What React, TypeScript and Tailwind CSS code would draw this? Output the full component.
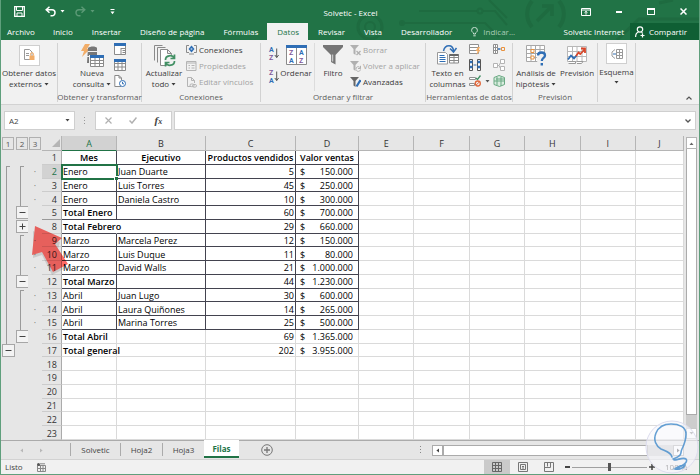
import clsx from "clsx";
import type { ReactNode } from "react";

type Row = {
  n: number;
  a?: string;
  b?: string;
  c?: string;
  d?: string;
  total?: boolean;
  l1?: "start" | "line" | "minus";
  l2?: "start" | "line" | "minus" | "plus";
};

const rows: Row[] = [
  { n: 1, a: "Mes", b: "Ejecutivo", c: "Productos vendidos", d: "Valor ventas" },
  { n: 2, a: "Enero", b: "Juan Duarte", c: "5", d: "150.000", l1: "start", l2: "start" },
  { n: 3, a: "Enero", b: "Luis Torres", c: "45", d: "250.000", l1: "line", l2: "line" },
  { n: 4, a: "Enero", b: "Daniela Castro", c: "10", d: "300.000", l1: "line", l2: "line" },
  { n: 5, a: "Total Enero", c: "60", d: "700.000", total: true, l1: "line", l2: "minus" },
  { n: 8, a: "Total Febrero", c: "29", d: "660.000", total: true, l1: "line", l2: "plus" },
  { n: 9, a: "Marzo", b: "Marcela Perez", c: "12", d: "150.000", l1: "line", l2: "start" },
  { n: 10, a: "Marzo", b: "Luis Duque", c: "11", d: "80.000", l1: "line", l2: "line" },
  { n: 11, a: "Marzo", b: "David Walls", c: "21", d: "1.000.000", l1: "line", l2: "line" },
  { n: 12, a: "Total Marzo", c: "44", d: "1.230.000", total: true, l1: "line", l2: "minus" },
  { n: 13, a: "Abril", b: "Juan Lugo", c: "30", d: "600.000", l1: "line", l2: "start" },
  { n: 14, a: "Abril", b: "Laura Quiñones", c: "14", d: "265.000", l1: "line", l2: "line" },
  { n: 15, a: "Abril", b: "Marina Torres", c: "25", d: "500.000", l1: "line", l2: "line" },
  { n: 16, a: "Total Abril", c: "69", d: "1.365.000", total: true, l1: "line", l2: "minus" },
  { n: 17, a: "Total general", c: "202", d: "3.955.000", total: true, l1: "minus" },
  { n: 18 },
  { n: 19 },
  { n: 20 },
  { n: 21 },
  { n: 22 },
  { n: 23 },
];

const emptyColumns = ["E", "F", "G", "H", "I", "J"];

function Caret({ className = "" }) {
  return (
    <svg viewBox="0 0 5 3" className={clsx("inline-block h-[3px] w-[5px]", className)}>
      <path d="M0.5 0h4L2.5 2.6z" fill="currentColor" />
    </svg>
  );
}

function TitleDecoration() {
  return (
    <svg
      className="pointer-events-none absolute right-0 top-0 h-10 w-[360px]"
      viewBox="340 0 360 40"
      fill="none"
      stroke="#1e6b40"
      strokeWidth="2"
    >
      <circle cx="371" cy="27" r="12" strokeWidth="3" />
      <circle cx="371" cy="27" r="5" />
      <path d="M406 23h80l14 14" />
      <circle cx="403" cy="23" r="2" fill="#1e6b40" />
      <path d="M420 11h58m6 0h12l12 14M490 0l18 18" />
      <circle cx="481" cy="11" r="2.5" />
      <path d="M533 1a20 20 0 0 0 0 26M560 1a20 20 0 0 1 0 26" strokeWidth="4" />
      <path d="M538 21l14-14M543 6h10v10" strokeWidth="3.5" />
      <path d="M618 40l22-21h60M660 3l14-3" strokeWidth="3" />
    </svg>
  );
}

function TitleBar() {
  return (
    <div className="relative flex h-[23px] items-center text-white">
      <div className="flex flex-1 items-center pl-[13px]">
        <button aria-label="Guardar">
          <svg className="h-[11px] w-[11px]" viewBox="0 0 11 11" fill="none" stroke="#fff">
            <path d="M.7.7h9.6v9.6H.7z" strokeWidth="1.3" />
            <path d="M2.5 1v3.5h6V1M3 10V7h5v3" />
          </svg>
        </button>
        <button aria-label="Deshacer" className="ml-5">
          <svg className="h-[11px] w-[11px]" viewBox="0 0 11 11" fill="none" stroke="#fff" strokeWidth="1.5">
            <path d="M4.5.8L1.2 3.8l3.3 3M1.5 3.8H7a3 3 0 0 1 0 6H5.5" />
          </svg>
        </button>
        <Caret className="ml-1" />
        <button aria-label="Rehacer" className="ml-[10px]">
          <svg className="h-[11px] w-[11px]" viewBox="0 0 11 11" fill="none" stroke="#5b9a76" strokeWidth="1.4">
            <path d="M6.5.8l3.3 3-3.3 3M9.5 3.8H4a3 3 0 0 0 0 6h1.5" />
          </svg>
        </button>
        <Caret className="ml-1 text-[#5b9a76]" />
        <button aria-label="Personalizar" className="ml-[15px]">
          <svg className="h-[6px] w-[5px]" viewBox="0 0 5 6" fill="#fff">
            <path d="M.5 0h4v1h-4zM.5 2.5h4l-2 2.7z" />
          </svg>
        </button>
      </div>
      <h1 className="pt-[2px] text-[8px]">Solvetic - Excel</h1>
      <div className="flex flex-1 items-center justify-end gap-[25px] pr-3">
        <button aria-label="Opciones de cinta">
          <svg className="h-[8px] w-[10px]" viewBox="0 0 10 8" fill="none" stroke="#fff">
            <path d="M.5.5h9v7h-9zM1 2h8M5 6.7V3.5M3.5 4.7L5 3.3l1.5 1.4" />
          </svg>
        </button>
        <button aria-label="Minimizar" className="h-[2px] w-[6px] bg-white" />
        <button aria-label="Maximizar" className="h-[7px] w-[8px] border border-t-2 border-white" />
        <button aria-label="Cerrar">
          <svg className="h-[7px] w-[7px]" viewBox="0 0 7 7" stroke="#fff" strokeWidth="1.5">
            <path d="M.5.5l6 6M6.5.5l-6 6" />
          </svg>
        </button>
      </div>
    </div>
  );
}

function MenuTabs() {
  const tab = "h-[17px] pl-[10px] pr-[9px] leading-[17px]";
  return (
    <nav className="relative flex h-[17px] items-center whitespace-nowrap text-[8px] text-white">
      <button className="h-[17px] pl-[6px] pr-2 leading-[17px]">Archivo</button>
      <button className={tab}>Inicio</button>
      <button className={tab}>Insertar</button>
      <button className={tab}>Diseño de página</button>
      <button className={tab}>Fórmulas</button>
      <button className={clsx(tab, "bg-[#f1f1f1] text-[#217346]")}>Datos</button>
      <button className={tab}>Revisar</button>
      <button className={tab}>Vista</button>
      <button className={tab}>Desarrollador</button>
      <button className="ml-[10px] flex items-center gap-[5px] text-[#a9cdb8]">
        <svg className="h-[10px] w-[7px]" viewBox="0 0 7 10" fill="none" stroke="#c9e0d2">
          <path d="M2.5 7V6C1.5 5.3.6 4.5.6 3.3a2.9 2.9 0 0 1 5.8 0C6.4 4.5 5.5 5.3 4.5 6v1zM2.3 8.8h2.4" />
        </svg>
        Indicar...
      </button>
      <span className="ml-auto pr-[6px]">Solvetic Internet</span>
      <button className="flex h-[17px] w-[69px] items-center gap-1 bg-[#0f5f34] pl-[5px]">
        <svg className="h-[12px] w-[10px]" viewBox="0 0 10 12" fill="none" stroke="#fff" strokeWidth="1.2">
          <circle cx="5" cy="3.5" r="2.7" />
          <path d="M.6 11c0-2.5 1.2-4.5 3-5M6.5 6.2l1 1M7.5 7.5v4M5.5 9.5h4" />
        </svg>
        Compartir
      </button>
    </nav>
  );
}

function Group({ label, className, children }: { label?: string; className: string; children: ReactNode }) {
  return (
    <section className={clsx("mb-[2px] mt-[3px] flex flex-col border-r border-[#d2d2d2]", className)}>
      <div className="flex flex-1">{children}</div>
      <div className="flex h-[11px] justify-center leading-[11px] text-[#5c5c5c]">{label}</div>
    </section>
  );
}

function BigButton({ icon, lines, caret, className }: { icon: ReactNode; lines: string[]; caret?: boolean; className?: string }) {
  return (
    <button className={clsx("flex flex-col items-center leading-[11px] text-[#3b3b3b]", className)}>
      <span className="flex h-[24px] items-center">{icon}</span>
      {lines.map((line, i) => (
        <span key={line}>
          {line}
          {caret && i === lines.length - 1 && <Caret className="mb-px ml-[2px]" />}
        </span>
      ))}
    </button>
  );
}

function SmallButton({ icon, label, off }: { icon: ReactNode; label: string; off?: boolean }) {
  return (
    <button className={clsx("flex h-[16px] items-center gap-[2px]", off ? "text-[#a3a3a3]" : "text-[#3b3b3b]")}>
      {icon}
      {label}
    </button>
  );
}

function TableIcon({ mode }: { mode: "panel" | "grid" | "recent" }) {
  return (
    <svg className="h-[12px] w-[12px]" viewBox="0 0 12 12" fill="none" stroke="#8a8a8a">
      {mode === "recent" ? (
        <>
          <path d="M7 11.5H.8V.5H5l2.5 2.5v2M5 .5V3h2.5" fill="#fff" />
          <circle cx="8.5" cy="8.5" r="3" fill="#fff" stroke="#2f6eb5" />
          <path d="M8.5 6.8v2H10" stroke="#2f6eb5" />
        </>
      ) : (
        <>
          <path d="M.5.5h11v11H.5z" fill="#fff" />
          {mode === "grid" && <path d="M0 4.5h12M0 8h12M4 1v11M8 1v11" />}
          {mode === "panel" && <path d="M7 5.5h5M7 5v6M8.5 7.5h3M8.5 9.5h3" />}
          <path d="M0 1.5h12" stroke="#2f6eb5" strokeWidth="3" />
        </>
      )}
    </svg>
  );
}

function NewQueryIcon() {
  return (
    <svg className="h-[23px] w-[24px]" viewBox="0 0 24 23">
      <path d="M5 0h5L7 5h3L2 13l2-6H1z" fill="#f2ad68" />
      <path d="M8 4c2-2 8-2 9 0v7H9v8H7z" fill="#777" />
      <path d="M8 7.5h9M7 12.5h4" stroke="#f1f1f1" />
      <path d="M10.5 11.5h13v11h-13z" fill="#fff" stroke="#8a8a8a" />
      <path d="M10.5 16.5h13M10.5 19.5h13M15 13v9M19.5 13v9" stroke="#8a8a8a" />
      <path d="M10 12.5h14" stroke="#2f6eb5" strokeWidth="3" />
    </svg>
  );
}

function RefreshIcon() {
  return (
    <svg className="h-[23px] w-[23px]" viewBox="0 0 23 23" fill="none" stroke="#8a8a8a">
      <path d="M1.5 16.5V1.5h8M4.5 18.5V3.5h8" />
      <path d="M7.5 5.5h7l4 4v12h-11zM14.5 5.5v4h4" fill="#fff" />
      <circle cx="17" cy="16.5" r="6" fill="#f1f1f1" stroke="none" />
      <path
        d="M12.5 16c0-5 7-5.5 8.5-2M21.5 10.5V14.5H17.5M21.5 17c0 5-7 5.5-8.500 2M12.5 22.500V18.500h4"
        stroke="#429064"
        strokeWidth="1.7"
      />
    </svg>
  );
}

function ConnectionIcon() {
  return (
    <svg className="h-[10px] w-[11px]" viewBox="0 0 11 10" fill="none" stroke="#8a8a8a">
      <path d="M3 .5H.5v7H3M8 .5h2.5v7H8M3 9h5" />
      <path d="M5.5.5l3 3.5-3 3.5-3-3.5z" fill="#2f6eb5" stroke="none" />
      <path d="M4.7 4h1.6" stroke="#fff" />
    </svg>
  );
}

function PropertiesIcon() {
  return (
    <svg className="h-[10px] w-[11px]" viewBox="0 0 11 10" fill="none" stroke="#b4b4b4">
      <path d="M.5.5h9.5v9H.5zM1 2h9M2.5 4.5h1.5M2.5 7h1.5M5.5 4.5h3M5.5 7h3" />
    </svg>
  );
}

function LinksIcon() {
  return (
    <svg className="h-[11px] w-[11px]" viewBox="0 0 11 11" fill="none" stroke="#b4b4b4">
      <path d="M5 9.5H1.5V.5h4l3 3V6M5.5.5v3h3" />
      <rect x="4" y="7" width="4" height="2.6" rx="1.3" />
      <rect x="6.5" y="7.5" width="4" height="2.6" rx="1.3" />
    </svg>
  );
}

function SortSmallIcon({ top, bottom }: { top: string; bottom: string }) {
  const color = (c: string) => (c === "A" ? "#2f6eb5" : "#80589b");
  return (
    <svg className="h-[15px] w-[10px] overflow-visible font-['Roboto',sans-serif] font-bold" viewBox="0 0 10 15">
      <text x="0" y="6" fontSize="7" fill={color(top)}>{top}</text>
      <text x="0" y="14" fontSize="7" fill={color(bottom)}>{bottom}</text>
      <path d="M7.7 2.5v9M5.8 9l1.9 2.5L9.600 9" fill="none" stroke="#555" />
    </svg>
  );
}

function SortIcon() {
  return (
    <svg className="h-[20px] w-[21px] font-['Roboto',sans-serif] font-bold" viewBox="0 0 21 20">
      <path d="M.5.5h20v19H.5zM10.5 1v18" fill="#fff" stroke="#8a8a8a" />
      <path d="M0 1.5h21" stroke="#2f6eb5" strokeWidth="3" />
      <g fontSize="7">
        <text x="3" y="10" fill="#80589b">Z</text>
        <text x="3" y="18" fill="#2f6eb5">A</text>
        <text x="13" y="10" fill="#2f6eb5">A</text>
        <text x="13" y="18" fill="#80589b">Z</text>
      </g>
    </svg>
  );
}

function FunnelIcon() {
  return (
    <svg className="h-[20px] w-[20px]" viewBox="0 0 20 20">
      <path d="M0 0h20v2l-7.500 8v9.500L8 17v-7L0 2z" fill="#757575" />
      <path d="M9.5 9.5v7" stroke="#c6c6c6" strokeWidth="1.5" />
    </svg>
  );
}

function SmallFunnel({ mode }: { mode: "clear" | "again" | "edit" }) {
  return (
    <svg className="h-[11px] w-[11px]" viewBox="0 0 11 11" fill="none">
      <path d="M0 0h9L5.5 4v6L3.5 8.5V4z" fill={mode === "edit" ? "#666" : "#b0b0b0"} />
      {mode === "clear" && <path d="M6.5 6l4 4M10.5 6l-4 4" stroke="#b0b0b0" strokeWidth="1.3" />}
      {mode === "again" && <path d="M6 8c0-3 4-3 4.5-.5M10.5 8.5c-.5 2.5-4 2.5-4.3 0M10.5 4.8v2.7H8" stroke="#b0b0b0" />}
      {mode === "edit" && <path d="M10.5 3L6.5 9.5" stroke="#2f6eb5" strokeWidth="2.2" />}
    </svg>
  );
}

function TextColumnsIcon() {
  return (
    <svg className="h-[20px] w-[22px]" viewBox="0 0 22 20" fill="none">
      <path d="M.5 7.5h8l2 2v9.5H.5z" fill="#fff" stroke="#999" />
      <path d="M2.5 10.5h5M2.5 12.5h6M2.5 14.5h6M2.5 16.5h6" stroke="#2f6eb5" />
      <path d="M6.5 6C8-1 16-1 16.5 6M13 3.5l3.5 3.5 3-4" stroke="#2f6eb5" strokeWidth="1.5" />
      <path d="M12.5 9.5h9v8.5h-9zM17 9v9M13 12.5h8M13 15.5h8" fill="#fff" stroke="#888" />
      <path d="M12.5 10h9" stroke="#666" strokeWidth="2" />
    </svg>
  );
}

function DataToolIcon({ kind }: { kind: "fill" | "dup" | "check" | "merge" | "rel" | "model" }) {
  return (
    <svg className="h-[12px] w-[12px]" viewBox="0 0 12 12" fill="none" stroke="#909090">
      {kind === "fill" && (
        <>
          <path d="M.5 1.5h9v9H.5zM.5 4.5h9M.5 7.5h9" fill="#fff" />
          <path d="M9 4L6.5 8h2L7.500 12l4-5H9.500l1.500-3z" fill="#f2ad68" stroke="none" />
        </>
      )}
      {kind === "dup" && (
        <>
          <path d="M.5.5h3v11h-3zM8.5.5h3v11h-3z" fill="#fff" stroke="#555" />
          <path d="M1 3h2.5M1 8h2.5M8.5 3H11M8.5 8H11" stroke="#2f6eb5" strokeWidth="2.5" />
          <path d="M4.5 6h3" stroke="#2f6eb5" />
        </>
      )}
      {kind === "check" && (
        <>
          <path d="M.5 2.5h6v2h-6zM.5 8.5h5v2h-5z" fill="#fff" />
          <path d="M7 3l1.5 1.5L11.5.5" stroke="#429064" strokeWidth="1.3" />
          <circle cx="8.8" cy="8.5" r="2.5" stroke="#e0673b" strokeWidth="1.3" />
          <path d="M7 10.2l3.5-3.4" stroke="#e0673b" />
        </>
      )}
      {kind === "merge" && (
        <>
          <path d="M.5 1.5h4v9h-4zM.5 4.5h4M.5 7.5h4M2.5 2v8" fill="#fff" />
          <path d="M5 6h2.5" stroke="#2f6eb5" strokeWidth="1.5" />
          <path d="M8.5 4.5h3v3h-3z" stroke="#e8923f" />
        </>
      )}
      {kind === "rel" && (
        <path d="M.5 4.5h4v4h-4zM7.5.5h4v4h-4zM7.5 7.5h4v4h-4zM4.5 6.5h1.5l1.5-3M6 6.5l1.5 3" fill="#fff" stroke="#b4b4b4" />
      )}
      {kind === "model" && (
        <path d="M1 2.5l5-2 5.500 2v7l-5 2L1 9.500zM1 6h10M4 2v8M8 2v9M3 4h8" fill="#d9ecdf" stroke="#6aa983" />
      )}
    </svg>
  );
}

function WhatIfIcon() {
  return (
    <svg className="h-[21px] w-[21px]" viewBox="0 0 21 21" fill="none">
      <path d="M.5.5h18v16H.5zM.5 4.5h18M.5 8.5h18M.5 12.5h18M5 .5v16M9.5.5v16M14 .5v16" fill="#fff" stroke="#a8a8a8" />
      <path d="M5 4.5h3v3H5zM5 11h3v3H5z" fill="#fff" stroke="#e8923f" />
      <circle cx="15.5" cy="14" r="5" fill="#f1f1f1" />
      <path d="M12 10.500c0-4 7-4 7 0 0 2.500-3.200 2.500-3.200 5.500" stroke="#2f6eb5" strokeWidth="2.3" />
      <path d="M14.6 18h2.4v2.5h-2.400z" fill="#2f6eb5" />
    </svg>
  );
}

function ForecastIcon() {
  return (
    <svg className="h-[19px] w-[20px]" viewBox="0 0 20 19" fill="none">
      <path d="M.5.5h19v15H.5zM.5 5.5h19M.5 10.5h19M5.5.5v15M10 .5v15M15 .5v15" fill="#fff" stroke="#b8b8b8" />
      <path d="M1.5 15.5h7v2h-7M10 15.5h6l-1.5 2H10" stroke="#999" fill="#fff" />
      <path d="M1 13.5l3-4 3 3 2.5-3" stroke="#2f6eb5" strokeWidth="1.8" />
      <path d="M9 10l2.5-3.5 1.8 1.5L18 3M14 2.5h4V7" stroke="#d8472b" strokeWidth="1.8" />
    </svg>
  );
}

function BoxedIcon({ children }: { children: ReactNode }) {
  return <span className="flex h-[21px] w-[21px] items-center justify-center border border-[#cfcfcf] bg-white">{children}</span>;
}

function Ribbon() {
  return (
    <div className="flex h-[65px] overflow-hidden whitespace-nowrap border-b border-[#d2d2d2] bg-[#f1f1f1] text-[8px]">
      <Group className="w-[57px]">
        <BigButton
          className="w-full"
          caret
          lines={["Obtener datos", "externos"]}
          icon={
            <BoxedIcon>
              <svg className="h-[12px] w-[11px]" viewBox="0 0 11 12" fill="none">
                <path d="M.5.5h5l2.5 2.5v7.5H.5zM2 4.5h3M2 6.5h3" stroke="#999" />
                <path d="M5.5 6.5h5v4.5h-5z" fill="#f2ad68" />
                <path d="M6.5 6.5V5.2a1.5 1.5 0 0 1 3 0v1.3" stroke="#f2ad68" />
              </svg>
            </BoxedIcon>
          }
        />
      </Group>
      <Group className="w-[84px]" label="Obtener y transformar">
        <BigButton className="ml-3 w-[44px]" caret lines={["Nueva", "consulta"]} icon={<NewQueryIcon />} />
        <div className="flex flex-col gap-1">
          <button aria-label="Mostrar consultas"><TableIcon mode="panel" /></button>
          <button aria-label="Desde una tabla"><TableIcon mode="grid" /></button>
          <button aria-label="Fuentes recientes"><TableIcon mode="recent" /></button>
        </div>
      </Group>
      <Group className="w-[119px]" label="Conexiones">
        <BigButton className="w-[44px]" caret lines={["Actualizar", "todo"]} icon={<RefreshIcon />} />
        <div className="-mt-px">
          <SmallButton icon={<ConnectionIcon />} label="Conexiones" />
          <SmallButton off icon={<PropertiesIcon />} label="Propiedades" />
          <SmallButton off icon={<LinksIcon />} label="Editar vínculos" />
        </div>
      </Group>
      <Group className="w-[165px]" label="Ordenar y filtrar">
        <div className="flex w-[18px] flex-col items-end gap-2 pt-[3px]">
          <button aria-label="Ordenar de A a Z"><SortSmallIcon top="A" bottom="Z" /></button>
          <button aria-label="Ordenar de Z a A"><SortSmallIcon top="Z" bottom="A" /></button>
        </div>
        <BigButton className="w-[34px]" lines={["Ordenar"]} icon={<SortIcon />} />
        <div className="mx-px w-px bg-[#dcdcdc]" />
        <BigButton className="w-[34px]" lines={["Filtro"]} icon={<FunnelIcon />} />
        <div className="-mt-px">
          <SmallButton off icon={<SmallFunnel mode="clear" />} label="Borrar" />
          <SmallButton off icon={<SmallFunnel mode="again" />} label="Volver a aplicar" />
          <SmallButton icon={<SmallFunnel mode="edit" />} label="Avanzadas" />
        </div>
      </Group>
      <Group className="w-[87px]" label="Herramientas de datos">
        <BigButton className="w-[43px]" lines={["Texto en", "columnas"]} icon={<TextColumnsIcon />} />
        <div className="flex flex-col gap-1">
          <button aria-label="Relleno rápido"><DataToolIcon kind="fill" /></button>
          <button aria-label="Quitar duplicados"><DataToolIcon kind="dup" /></button>
          <button aria-label="Validación de datos"><DataToolIcon kind="check" /></button>
        </div>
        <div className="flex w-[12px] items-end justify-center pb-2 text-[#555]"><Caret /></div>
        <div className="flex flex-col gap-1">
          <button aria-label="Consolidar"><DataToolIcon kind="merge" /></button>
          <button aria-label="Relaciones"><DataToolIcon kind="rel" /></button>
          <button aria-label="Modelo de datos"><DataToolIcon kind="model" /></button>
        </div>
      </Group>
      <Group className="w-[85px]" label="Previsión">
        <BigButton className="w-[46px]" caret lines={["Análisis de", "hipótesis"]} icon={<WhatIfIcon />} />
        <BigButton className="w-[36px]" lines={["Previsión"]} icon={<ForecastIcon />} />
      </Group>
      <Group className="w-[38px]">
        <button className="flex w-full flex-col items-center leading-[11px] text-[#3b3b3b]">
          <BoxedIcon>
            <svg className="h-[10px] w-[12px]" viewBox="0 0 12 10" fill="none" stroke="#999">
              <path d="M5.5.5h6v9h-6zM5.5 3.5h6M5.5 6.5h6M8.5.5v9M4 .5L1 3v4l3 2.5" />
              <path d="M2 5h3" stroke="#2f6eb5" />
            </svg>
          </BoxedIcon>
          <span className="mt-[2px]">Esquema</span>
          <Caret className="mt-1" />
        </button>
      </Group>
      <button aria-label="Contraer la cinta" className="ml-auto self-end pb-1 pr-[7px]">
        <svg className="h-[4px] w-[6px]" viewBox="0 0 6 4" fill="none" stroke="#555" strokeWidth="1.2">
          <path d="M.5 3.5L3 1l2.5 2.5" />
        </svg>
      </button>
    </div>
  );
}

function FormulaBar() {
  return (
    <div className="flex items-center bg-[#e6e6e6] px-[3px] py-[6px] text-[8px] text-[#444]">
      <div className="flex h-[19px] w-[71px] items-center border border-[#cfcfcf] bg-white pr-1">
        <input aria-label="Cuadro de nombres" defaultValue="A2" className="w-full min-w-0 flex-1 pl-1 outline-none" />
        <button aria-label="Ver nombres" className="flex"><Caret /></button>
      </div>
      <svg className="mx-[9px] h-[8px] w-[2px]" viewBox="0 0 2 8" fill="#999">
        <path d="M0 0h1v1H0zM0 3h1v1H0zM0 6h1v1H0z" />
      </svg>
      <div className="flex h-[19px] w-[77px] items-center justify-around border border-[#cfcfcf] bg-white">
        <button aria-label="Cancelar">
          <svg className="h-[7px] w-[7px]" viewBox="0 0 7 7" stroke="#b0b0b0" strokeWidth="1.2">
            <path d="M.5.5l6 6M6.5.5l-6 6" />
          </svg>
        </button>
        <button aria-label="Introducir">
          <svg className="h-[7px] w-[8px]" viewBox="0 0 8 7" fill="none" stroke="#b0b0b0" strokeWidth="1.5">
            <path d="M.5 3.5L3 6l4.5-5.5" />
          </svg>
        </button>
        <button aria-label="Insertar función" className="font-['Liberation_Serif',serif] text-[11px] font-bold italic leading-none">
          f<span className="text-[8px]">x</span>
        </button>
      </div>
      <div className="ml-[2px] flex h-[19px] flex-1 items-center border border-[#cfcfcf] bg-white pr-1">
        <input aria-label="Barra de fórmulas" className="min-w-0 flex-1 outline-none" />
        <svg className="h-[4px] w-[6px]" viewBox="0 0 6 4" fill="none" stroke="#555" strokeWidth="1.3">
          <path d="M.5.5L3 3 5.5.5" />
        </svg>
      </div>
    </div>
  );
}

function OutlineCell({ kind }: { kind?: string }) {
  return (
    <td
      className={clsx(
        "bg-[#e6e6e6] pl-px",
        kind === "line" && "[background:linear-gradient(#9a9a9a,#9a9a9a)_5px_0/1px_100%_no-repeat,#e6e6e6]",
        kind === "start" &&
          "[background:linear-gradient(#9a9a9a,#9a9a9a)_5px_1px/1px_100%_no-repeat,linear-gradient(#9a9a9a,#9a9a9a)_5px_1px/4px_1px_no-repeat,#e6e6e6]",
      )}
    >
      {(kind === "minus" || kind === "plus") && (
        <button
          aria-label={kind === "minus" ? "Contraer grupo" : "Expandir grupo"}
          className="flex h-[13px] w-[13px] items-center justify-center border border-[#a6a6a6] bg-[#f3f3f3]"
        >
          <svg className="h-[7px] w-[7px]" viewBox="0 0 7 7" stroke="#444">
            <path d={kind === "minus" ? "M.5 3.5h6" : "M.5 3.5h6M3.5.5v6"} />
          </svg>
        </button>
      )}
    </td>
  );
}

function SheetRow({ row }: { row: Row }) {
  const header = row.n === 1;
  const boxed = row.n <= 15;
  const selected = row.n === 2;
  const dark = "border-[#43434f]";
  const light = "border-[#dadada]";
  const line = clsx("border-b border-r pb-0 pt-px", boxed ? dark : light);
  const bold = header || row.total ? "font-semibold" : "";
  return (
    <tr>
      <OutlineCell kind={row.l1} />
      <OutlineCell kind={row.l2} />
      <td className="bg-[#e6e6e6] p-0 text-center text-[#777]">{row.b && !header ? "·" : ""}</td>
      <th
        scope="row"
        className={clsx(
          "border-b border-r border-r-[#ababab] pb-0 pl-0 pr-1 pt-px text-right font-normal",
          selected ? "bg-[#d2d2d2] text-[#217346]" : "bg-[#e6e6e6] text-[#333]",
          row.n === 5 ? "border-b-[#999]" : "border-b-[#cccccc]",
        )}
      >
        {row.n}
      </th>
      <td
        className={clsx(
          line,
          bold,
          header ? "px-0 text-center" : "pl-px pr-0",
          row.n === 8 && "border-r-white",
          selected && "relative outline-2 -outline-offset-1 outline-[#217346]",
        )}
      >
        {row.a}
        {selected && <span className="absolute -bottom-[2px] -right-[2px] h-[4px] w-[4px] border-l border-t border-white bg-[#217346]" />}
      </td>
      <td className={clsx(line, bold, header ? "px-0 text-center" : "pl-px pr-0")}>{row.b}</td>
      <td className={clsx(line, header ? "px-0 text-center font-semibold" : "pl-0 pr-px text-right")}>{row.c}</td>
      <td className={clsx(line, "px-0", header && "text-center font-semibold")}>
        {header || !row.d ? (
          row.d
        ) : (
          <span className="flex justify-between pl-1 pr-[5px]">
            <span>$</span>
            <span>{row.d}</span>
          </span>
        )}
      </td>
      {emptyColumns.map((c) => (
        <td key={c} className={clsx("border-b border-r p-0", light)} />
      ))}
    </tr>
  );
}

function Worksheet() {
  const head = "h-[15px] border-b border-r p-0 font-normal";
  return (
    <div className="relative flex min-h-0 flex-1 bg-[#e6e6e6]">
      <div className="h-full min-w-0 flex-1">
        <table className="h-full w-full table-fixed border-separate border-spacing-0 whitespace-nowrap bg-white text-[9px] leading-[11px] text-black">
          <colgroup>
            <col className="w-[14px]" />
            <col className="w-[13px]" />
            <col className="w-[14px]" />
            <col className="w-[20px]" />
            <col className="w-[55px]" />
            <col className="w-[89px]" />
            <col className="w-[90px]" />
            <col className="w-[63px]" />
            <col />
            <col />
            <col />
            <col />
            <col />
            <col className="w-12" />
          </colgroup>
          <thead>
            <tr className="bg-[#e6e6e6] text-[#333]">
              {["1", "2", "3"].map((level) => (
                <td key={level} className="p-0 pl-px">
                  <button className="h-[13px] w-[12px] border border-[#b0b0b0] text-center text-[8px] leading-[11px] text-[#555]">
                    {level}
                  </button>
                </td>
              ))}
              <td className="border-b border-r border-[#b5b5b5] p-0">
                <svg className="ml-auto mr-px h-[8px] w-[8px]" viewBox="0 0 8 8">
                  <path d="M8 0v8H0z" fill="#b5b5b5" />
                </svg>
              </td>
              <th scope="col" className={clsx(head, "border-b-[#217346] border-r-[#b5b5b5] bg-[#d2d2d2] text-[#217346]")}>A</th>
              {["B", "C", "D", ...emptyColumns].map((c) => (
                <th key={c} scope="col" className={clsx(head, "border-[#b5b5b5]")}>{c}</th>
              ))}
            </tr>
          </thead>
          <tbody>
            {rows.map((row) => (
              <SheetRow key={row.n} row={row} />
            ))}
          </tbody>
        </table>
      </div>
      <div className="mx-[2px] my-px flex w-[11px] flex-col bg-[#cdcdcd]">
        <button aria-label="Subir" className="flex h-[12px] items-center justify-center border border-[#b5b5b5] bg-white text-[#666]">
          <Caret className="rotate-180" />
        </button>
        <div className="flex-1 border-x border-b border-[#ababab] bg-white" />
        <div className="h-[13px]" />
        <button aria-label="Bajar" className="flex h-[11px] items-center justify-center border border-[#c9c9c9] bg-white text-[#888]">
          <Caret />
        </button>
      </div>
      {/* pointer to the expand button of row 8 */}
      <svg className="pointer-events-none absolute left-[25px] top-[83px] h-[60px] w-[50px] mix-blend-multiply" viewBox="0 0 50 60">
        <path d="M7 12l0 27 9-3 10 20 14-7-8-19 2-7z" fill="#000" opacity=".12" />
        <path d="M9 7l27 12-7 6 13 20-15 8-11-20-10 3z" fill="#ff6a66" />
      </svg>
    </div>
  );
}

function SheetTabs() {
  const tab = "h-[13px] border-l border-[#ababab] leading-[13px]";
  return (
    <div className="flex h-[19px] border-t border-[#ababab] bg-[#e6e6e6] pr-[15px] text-[8px] text-[#444]">
      <div className="flex items-center gap-[15px] pl-[18px] pr-[26px] text-[#b8b8b8]">
        <Caret className="rotate-90" />
        <Caret className="-rotate-90" />
      </div>
      <div className="flex pt-[2px]">
        <button className={clsx(tab, "w-[50px]")}>Solvetic</button>
        <button className={clsx(tab, "w-[42px]")}>Hoja2</button>
        <button className={clsx(tab, "w-[42px]")}>Hoja3</button>
      </div>
      <button className="-mt-px h-[18px] w-[35px] border-b-2 border-[#217346] bg-white pt-px font-bold text-[#217346]">Filas</button>
      <button aria-label="Hoja nueva" className="ml-[22px]">
        <svg className="h-[12px] w-[12px]" viewBox="0 0 12 12" fill="none" stroke="#777">
          <circle cx="6" cy="6" r="5.3" />
          <path d="M3 6h6M6 3v6" strokeWidth="1.3" />
        </svg>
      </button>
      <div className="ml-auto flex w-[264px] items-center">
        <svg className="mr-[10px] h-[8px] w-[2px]" viewBox="0 0 2 8" fill="#888">
          <path d="M0 0h1v1H0zM0 3h1v1H0zM0 6h1v1H0z" />
        </svg>
        <button aria-label="Izquierda" className="flex h-[11px] w-[11px] items-center justify-center border border-[#ababab] bg-white">
          <Caret className="rotate-90" />
        </button>
        <div className="h-[11px] w-[205px] border border-[#ababab] bg-white" />
        <div className="h-[11px] flex-1 bg-[#cdcdcd]" />
        <button aria-label="Derecha" className="flex h-[11px] w-[11px] items-center justify-center border border-[#ababab] bg-white">
          <Caret className="-rotate-90" />
        </button>
      </div>
    </div>
  );
}

function StatusBar() {
  return (
    <div className="flex h-[15px] items-center border-t border-[#d2d2d2] bg-[#f1f1f1] pl-1 text-[8px] text-[#444]">
      <span>Listo</span>
      <svg className="ml-[14px] h-[9px] w-[9px]" viewBox="0 0 9 9" fill="none" stroke="#888">
        <path d="M.5 2.5h8v6h-8zM.5 5.5h8M3.5 3v5M6 3v5M3 .8h5" />
        <circle cx="1.5" cy="1.5" r="1.5" fill="#555" stroke="none" />
      </svg>
      <div className="ml-auto flex h-full items-center">
        <button aria-label="Normal" className="flex h-full w-[26px] items-center justify-center bg-[#cacaca]">
          <svg className="h-[10px] w-[10px]" viewBox="0 0 10 10" fill="none" stroke="#666">
            <path d="M.5.5h9v9h-9zM.5 3.5h9M.5 6.5h9M3.5.5v9M6.5.5v9" />
          </svg>
        </button>
        <button aria-label="Diseño de página" className="flex w-[26px] justify-center">
          <svg className="h-[10px] w-[10px]" viewBox="0 0 10 10" fill="none" stroke="#777">
            <path d="M.5.5h9v9h-9zM2.5 2.5h5v5h-5zM4 4.5h2M4 6h2" />
          </svg>
        </button>
        <button aria-label="Saltos de página" className="flex w-[26px] justify-center">
          <svg className="h-[10px] w-[10px]" viewBox="0 0 10 10" fill="none" stroke="#777">
            <path d="M.5.5h9v9h-9zM3.5.5v4M6.5.5v5h-6" />
          </svg>
        </button>
        <button aria-label="Alejar" className="ml-[3px] h-[2px] w-[5px] bg-[#444]" />
        <input
          type="range"
          aria-label="Zoom"
          className="mx-[2px] h-[9px] w-[75px] appearance-none bg-[linear-gradient(#a0a0a0,#a0a0a0)] bg-[length:100%_1px] bg-center bg-no-repeat [&::-webkit-slider-thumb]:h-[8px] [&::-webkit-slider-thumb]:w-[3px] [&::-webkit-slider-thumb]:appearance-none [&::-webkit-slider-thumb]:bg-[#555]"
        />
        <button aria-label="Acercar">
          <svg className="h-[6px] w-[6px]" viewBox="0 0 6 6" stroke="#444" strokeWidth="1.5">
            <path d="M0 3h6M3 0v6" />
          </svg>
        </button>
        <span className="w-[44px] pl-[10px]">100 %</span>
      </div>
    </div>
  );
}

function BulbWatermark() {
  return (
    <svg className="pointer-events-none absolute bottom-0 right-0 h-[54px] w-[54px]" viewBox="0 0 54 54" fill="none">
      <circle cx="27" cy="27" r="26" fill="#f6f7fc" opacity=".6" />
      <circle cx="27" cy="27" r="26" stroke="#dcdcee" />
      <path
        d="M27 37C26 32 20 31 16 29 11 26 8 20 11 13 14 6 20 4 26 4c8 0 15 3 15 10 0 7-2 11-4 15-2 4 0 5-3 7-2 2-4 2-6 3M29 40c4 0 9-3 12-1 3 3-5 8-11 10 4 1 9-1 10-4-4 0-6 1-9 3"
        stroke="#4a8fcc"
        strokeWidth="1.6"
        strokeLinecap="round"
        opacity=".85"
      />
    </svg>
  );
}

export default function App() {
  return (
    <main className="relative flex h-screen min-h-[475px] flex-col overflow-hidden border-x border-b border-[#5f9f7c] font-['Open_Sans','Noto_Sans',sans-serif]">
      <header className="relative bg-[#217346]">
        <TitleDecoration />
        <TitleBar />
        <MenuTabs />
      </header>
      <Ribbon />
      <FormulaBar />
      <Worksheet />
      <SheetTabs />
      <StatusBar />
      <BulbWatermark />
    </main>
  );
}
